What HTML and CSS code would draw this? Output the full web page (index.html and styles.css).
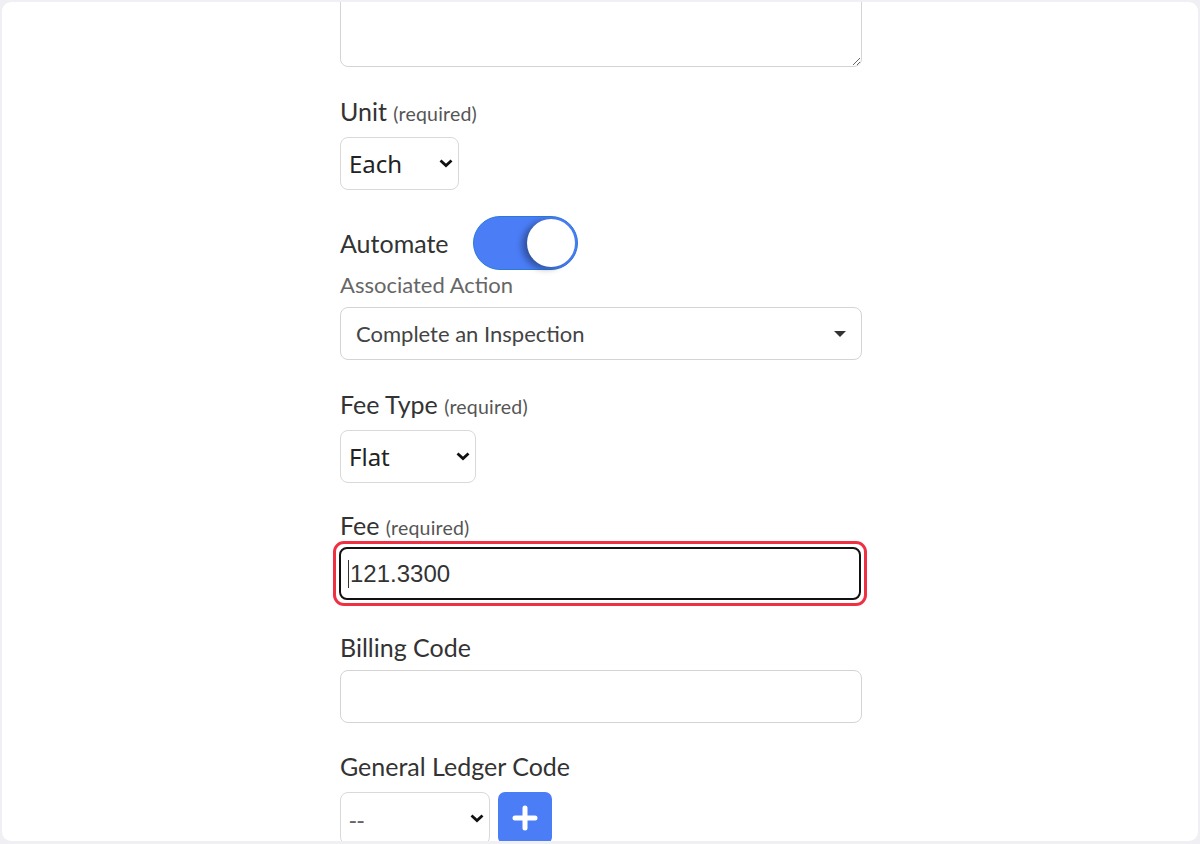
FILE: index.html
```html
<!DOCTYPE html>
<html lang="en">
<head>
    <meta charset="UTF-8">
    <meta name="viewport" content="width=device-width, initial-scale=1.0">
    <title>Fee</title>
    <link rel="stylesheet" href="styles.css">
</head>
<body>

<div class="frame">
    <form class="fee-form">
        <textarea class="notes"></textarea>

        <div class="field">
            <label class="label">Unit <span class="req">(required)</span></label>
            <div class="select-wrap unit-select">
                <select class="select">
                    <option>Each</option>
                </select>
                <svg class="chevron" width="16" height="10" viewBox="0 0 16 10"><path d="M2.5 2.5l5.5 5 5.5-5" fill="none" stroke="#111" stroke-width="2.8"/></svg>
            </div>
        </div>

        <div class="field">
            <div class="automate-row">
                <span class="label">Automate</span>
                <span class="toggle"><span class="knob"></span></span>
            </div>
            <div class="sub-label">Associated Action</div>
            <div class="action-select">
                <span>Complete an Inspection</span>
                <span class="caret"></span>
            </div>
        </div>

        <div class="field">
            <label class="label">Fee Type <span class="req">(required)</span></label>
            <div class="select-wrap type-select">
                <select class="select">
                    <option>Flat</option>
                </select>
                <svg class="chevron" width="16" height="10" viewBox="0 0 16 10"><path d="M2.5 2.5l5.5 5 5.5-5" fill="none" stroke="#111" stroke-width="2.8"/></svg>
            </div>
        </div>

        <div class="field fee-field">
            <label class="label">Fee <span class="req">(required)</span></label>
            <div class="highlight">
                <div class="fee-input"><span class="cursor"></span>121.3300</div>
            </div>
        </div>

        <div class="field billing-field">
            <label class="label">Billing Code</label>
            <input class="text-input" type="text">
        </div>

        <div class="field ledger-field">
            <label class="label">General Ledger Code</label>
            <div class="ledger-row">
                <div class="select-wrap ledger-select">
                    <select class="select">
                        <option>--</option>
                    </select>
                    <svg class="chevron" width="16" height="10" viewBox="0 0 16 10"><path d="M2.5 2.5l5.5 5 5.5-5" fill="none" stroke="#111" stroke-width="2.8"/></svg>
                </div>
                <button type="button" class="add-btn">
                    <svg width="26" height="26" viewBox="0 0 26 26">
                        <path d="M13 3v20M3 13h20" stroke="#fff" stroke-width="5" stroke-linecap="round"/>
                    </svg>
                </button>
            </div>
        </div>
    </form>
</div>

</body>
</html>
```

FILE: styles.css
```css
body, html {
    margin: 0;
    padding: 0;
    background: #efeff4;
    font-family: "Lato", "Liberation Sans", sans-serif;
}

.frame {
    margin: 2px;
    height: 839px;
    background: #fff;
    border-radius: 9px;
    overflow: hidden;
}

.fee-form {
    width: 522px;
    margin: -36px 0 0 338px;
    display: flex;
    flex-direction: column;
}

.notes {
    display: block;
    box-sizing: border-box;
    width: 522px;
    height: 101px;
    border: 1px solid #d4d4d4;
    border-radius: 8px;
    resize: vertical;
    margin: 0;
}

.field {
    display: flex;
    flex-direction: column;
    align-items: flex-start;
    margin-top: 29px;
}

.label {
    font-size: 25px;
    color: #333;
    line-height: 30px;
    margin-bottom: 8px;
}

.req {
    font-size: 19.5px;
    color: #555;
    letter-spacing: 0.2px;
}

/* selects with chevron drawn on top */
.select-wrap {
    position: relative;
    height: 53px;
}

.select {
    -webkit-appearance: none;
    appearance: none;
    box-sizing: border-box;
    width: 100%;
    height: 53px;
    border: 1px solid #d9d9d9;
    border-radius: 8px;
    background: #fff;
    font-family: "Noto Sans", "Open Sans", sans-serif;
    font-size: 24px;
    color: #222;
    padding: 0 0 0 8px;
    margin: 0;
}

.chevron {
    position: absolute;
    top: 21px;
    right: 5px;
    pointer-events: none;
}

.unit-select { width: 119px; }
.type-select { width: 136px; }
.ledger-select { width: 150px; }
.ledger-select .select { color: #666; }

.automate-row {
    display: flex;
    align-items: center;
    gap: 24px;
    height: 54px;
    margin-top: -3px;
}

.automate-row .label {
    margin: 0;
}

.toggle {
    width: 105px;
    height: 54px;
    border-radius: 27px;
    background: #4b7df7;
    box-sizing: border-box;
    border: 1.5px solid #2b7bd3;
    display: flex;
    justify-content: flex-end;
    align-items: center;
    padding-right: 2px;
}

.knob {
    width: 48px;
    height: 48px;
    border-radius: 50%;
    background: #fff;
    box-shadow: -5px 2px 6px rgba(0, 0, 0, 0.35);
}

.sub-label {
    font-size: 22px;
    color: #666;
    line-height: 28px;
    margin: 1px 0 8px;
}

.action-select {
    box-sizing: border-box;
    width: 522px;
    height: 53px;
    border: 1px solid #d4d4d4;
    border-radius: 8px;
    display: flex;
    align-items: center;
    justify-content: space-between;
    padding: 0 15px 0 15px;
    font-size: 22px;
    color: #444;
}

.caret {
    width: 0;
    height: 0;
    border-left: 6px solid transparent;
    border-right: 6px solid transparent;
    border-top: 6px solid #333;
}

.fee-field {
    margin-top: 27px;
}

.fee-field .label {
    margin-bottom: -2px;
}

.highlight {
    margin: 0 0 0 -7px;
    padding: 3px;
    border: 3px solid #ef3042;
    border-radius: 11px;
}

.fee-input {
    box-sizing: border-box;
    width: 522px;
    height: 53px;
    border: 2px solid #111;
    border-radius: 8px;
    display: flex;
    align-items: center;
    padding-left: 7px;
    font-family: "Liberation Sans", Arial, sans-serif;
    font-size: 24px;
    color: #333;
}

.cursor {
    width: 1px;
    height: 28px;
    background: #333;
    margin-right: 1px;
}

.billing-field {
    margin-top: 26px;
}

.text-input {
    box-sizing: border-box;
    width: 522px;
    height: 53px;
    border: 1px solid #d4d4d4;
    border-radius: 8px;
    margin: 0;
}

.ledger-field {
    margin-top: 28px;
}

.ledger-field .label {
    margin-bottom: 11px;
}

.ledger-row {
    display: flex;
    gap: 8px;
}

.add-btn {
    width: 54px;
    height: 52px;
    border: none;
    border-radius: 7px;
    background: #4b7df7;
    display: flex;
    align-items: center;
    justify-content: center;
    padding: 0;
}
```
